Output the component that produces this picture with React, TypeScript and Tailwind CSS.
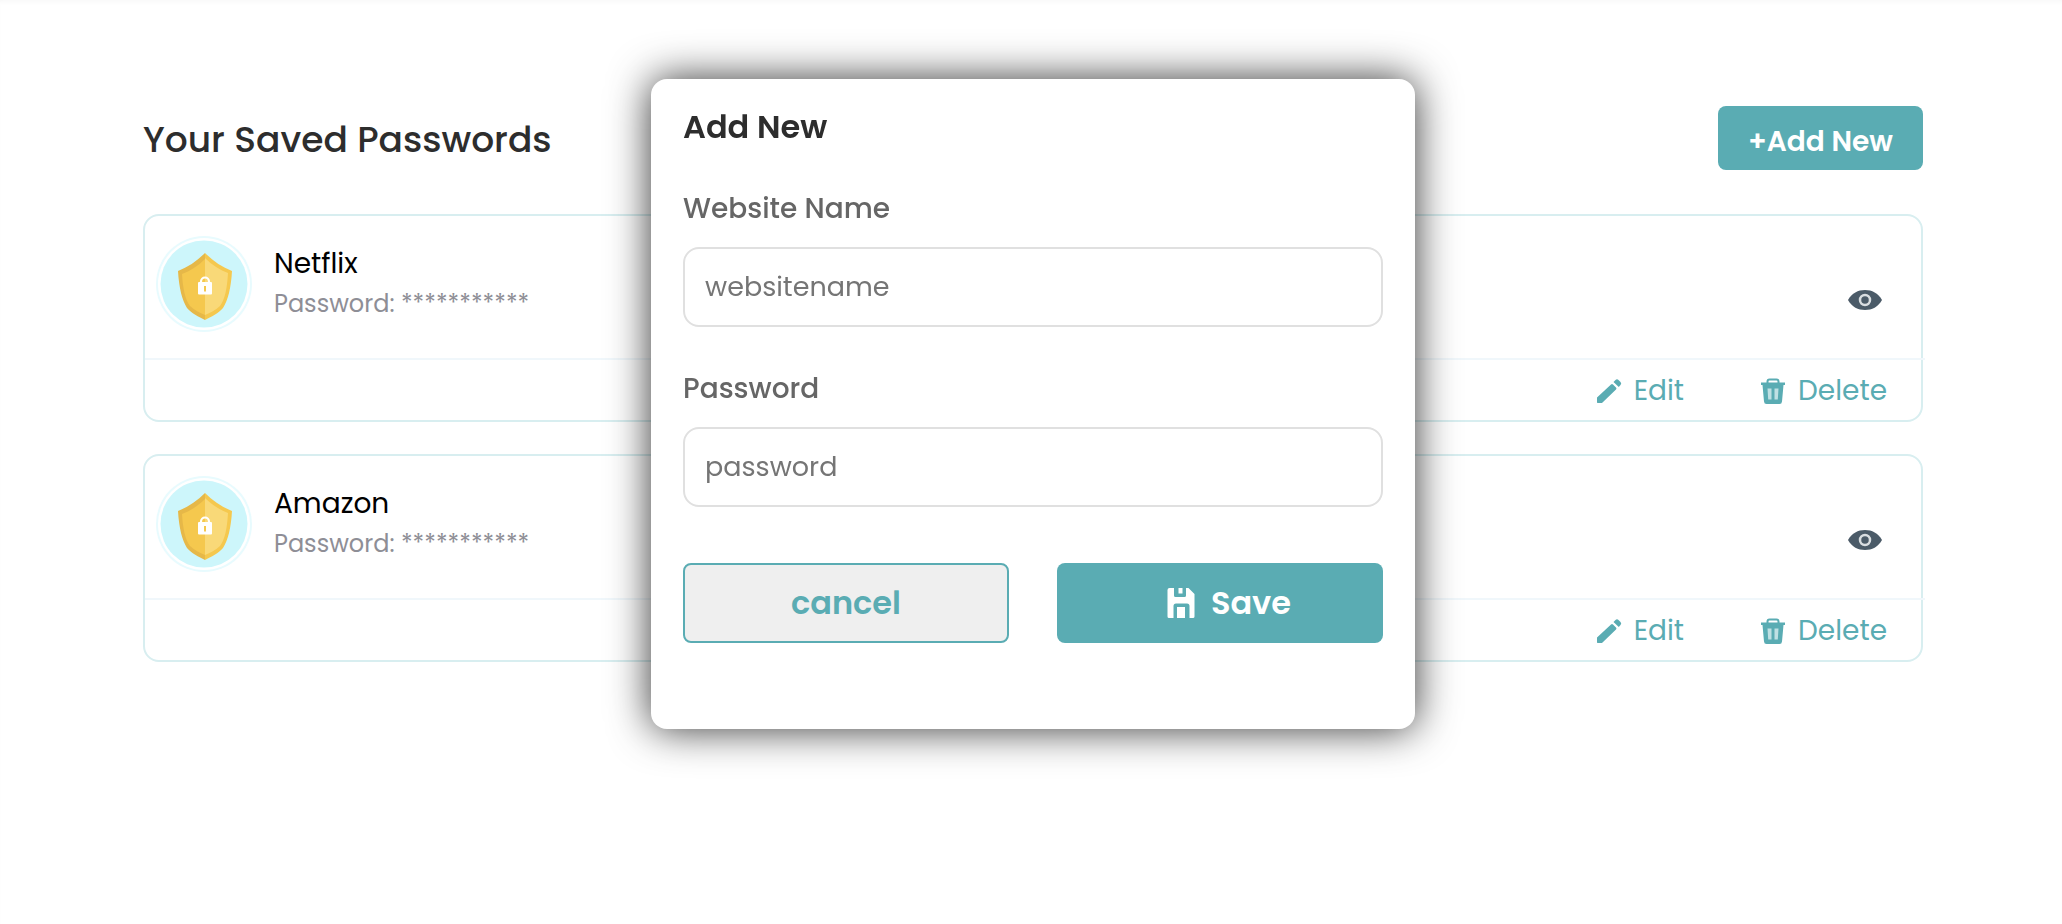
import { useId } from "react";

const entries = [{ name: "Netflix" }, { name: "Amazon" }];

function ShieldIcon() {
  return (
    <svg viewBox="0 0 96 96" className="size-24 shrink-0" aria-hidden="true">
      <circle cx="48" cy="48" r="48" fill="#e8fbfe" />
      <circle cx="48" cy="48" r="46" fill="#ffffff" />
      <circle cx="48" cy="48" r="43.5" fill="#cdf6fb" />
      <g transform="translate(1 0)">
        <path d="M48 17C40 25 31 31 21 35C22 52 25 64 30 72C34 77 42 81 48 84Z" fill="#e6b848" />
        <path d="M48 17C56 25 65 31 75 35C74 52 71 64 66 72C62 77 54 81 48 84Z" fill="#f5c84e" />
        <path d="M48 23C41 30 33 35 25 38C26 53 28 63 33 70C37 74 43 77 48 79Z" fill="#f5c84e" />
        <path d="M48 22C55 29 63 34 71 37C70 53 68 63 63 70C59 74 53 77 48 79Z" fill="#f9d978" />
        <path d="M44 47V45.500a4 4 0 0 1 8 0V47" fill="none" stroke="#fff" strokeWidth="2.200" />
        <rect x="41" y="46" width="14" height="12.500" rx="1" fill="#fff" />
        <path d="M48 50V55.500" stroke="#f5c84e" strokeWidth="2" />
      </g>
    </svg>
  );
}

function EyeIcon() {
  return (
    <svg viewBox="0 0 34 22" className="h-[22px] w-[34px]" aria-hidden="true">
      <path d="M0 11C4 4 10 1 17 1S30 4 34 11C30 18 24 21 17 21S4 18 0 11Z" fill="#4b5b68" />
      <circle cx="17" cy="11" r="5" fill="none" stroke="#d9dee1" strokeWidth="2.500" />
    </svg>
  );
}

function PencilIcon() {
  return (
    <svg viewBox="0 0 26 26" className="size-[26px]" fill="#5aacb3" aria-hidden="true">
      <path d="M1 19.500L15 6.500Q16 5.500 17 6.500L20 9.500Q21 10.500 20 11.500L6.500 24.500Q6 25 5 25H1.500Q1 25 1 24Z" />
      <path d="M17.500 4L19.500 2Q21 .5 22.500 2L24.500 4Q26 5.500 24.500 7L22.800 9Z" />
    </svg>
  );
}

function TrashIcon() {
  return (
    <svg viewBox="0 0 26 28" className="h-7 w-[26px]" aria-hidden="true">
      <path d="M7.500 6V4.500Q7.500 2.500 9.500 2.500H16.500Q18.500 2.500 18.500 4.500V6" fill="none" stroke="#5aacb3" strokeWidth="2" />
      <path d="M1 5.500H25V8H23.500L22 24.500Q21.800 27 19.500 27H6.500Q4.200 27 4 24.500L2.500 8H1Z" fill="#5aacb3" />
      <path d="M7.500 11.500H11.500V22.500H8.200Z M14.500 11.500H18.500L17.800 22.500H14.500Z" fill="#bfe0e3" />
    </svg>
  );
}

function SaveIcon() {
  return (
    <svg viewBox="0 0 28 32" className="h-8 w-7" fill="#fff" aria-hidden="true">
      <path d="M2.500 1H7V8.500Q7 10 8.500 10H17.500Q19 10 19 8.500V1H21.500L27.500 7V29.500Q27.500 31 26 31H22.500V19Q22.500 16.500 20 16.500H9Q6.500 16.500 6.500 19V31H2Q.5 31 .5 29.500V3Q.5 1 2.500 1Z" />
      <path d="M11.500 1H15.500V6.500H11.500Z M10 20H18V31H10Z" />
    </svg>
  );
}

function PasswordCard({ name }: { name: string }) {
  return (
    <li className="rounded-2xl border-2 border-[#d8eef0]">
      <div className="flex h-[142px] items-start pt-5 pr-[39px] pl-[11px]">
        <ShieldIcon />
        <div className="ml-[22px] pt-2">
          <h2 className="text-[28px] leading-10 text-black">{name}</h2>
          <p className="text-2xl leading-10 text-[#8e8e96]">Password: ***********</p>
        </div>
        <button type="button" aria-label={`Show ${name} password`} className="mt-[53px] ml-auto">
          <EyeIcon />
        </button>
      </div>
      <div className="-mr-1 flex h-[62px] items-center justify-end gap-[76px] border-t-2 border-[#f0f7fb] pt-0.5 pr-[38px] text-[28px] leading-10 text-[#5aacb3]">
        <button type="button" className="flex items-center gap-3">
          <PencilIcon />
          Edit
        </button>
        <button type="button" className="flex items-center gap-3">
          <TrashIcon />
          Delete
        </button>
      </div>
    </li>
  );
}

function Field({ label, placeholder, type }: { label: string; placeholder: string; type: string }) {
  const id = useId();
  return (
    <div className="flex flex-col gap-[18px]">
      <label htmlFor={id} className="text-[28px] leading-10 font-medium text-[#666666]">
        {label}
      </label>
      <input
        id={id}
        type={type}
        placeholder={placeholder}
        className="h-20 w-full rounded-2xl border-2 border-[#e0e0e0] bg-white px-5 text-[27px] text-[#2d2d2d] placeholder:text-[#757575]"
      />
    </div>
  );
}

export default function App() {
  return (
    <div className="min-h-screen bg-white font-['Poppins','Inter',sans-serif] shadow-[inset_0_4px_4px_-2px_#f8f8f8]">
      <main className="pt-[106px] pr-[139px] pb-16 pl-[143px]">
        <header className="flex h-16 items-center justify-between">
          <h1 className="pt-1 text-4xl font-medium text-[#2d2d2d]">Your Saved Passwords</h1>
          <button type="button" className="h-16 rounded-lg bg-[#5aacb3] px-[30px] pt-2 text-[28px] font-semibold text-white">
            +Add New
          </button>
        </header>
        <ul className="mt-11 flex flex-col gap-8">
          {entries.map((entry) => (
            <PasswordCard key={entry.name} name={entry.name} />
          ))}
        </ul>
      </main>

      <div className="fixed inset-x-0 top-[79px] flex justify-center pl-1">
        <form
          role="dialog"
          aria-labelledby="dialog-title"
          onSubmit={(event) => event.preventDefault()}
          className="w-full max-w-[764px] rounded-2xl bg-white px-8 pt-6 pb-[86px] shadow-[0_0_42px_rgba(0,0,0,0.8)]"
        >
          <h2 id="dialog-title" className="text-[32px] leading-12 font-semibold text-[#2d2d2d]">
            Add New
          </h2>
          <div className="mt-[38px] flex flex-col gap-[42px]">
            <Field label="Website Name" placeholder="websitename" type="text" />
            <Field label="Password" placeholder="password" type="password" />
          </div>
          <div className="mt-14 grid grid-cols-2 gap-12 text-[32px] font-semibold">
            <button type="button" className="h-20 rounded-lg border-2 border-[#5aacb3] bg-[#efefef] text-[#5aacb3]">
              cancel
            </button>
            <button type="submit" className="flex h-20 items-center justify-center gap-4 rounded-lg bg-[#5aacb3] pl-[18px] text-white">
              <SaveIcon />
              Save
            </button>
          </div>
        </form>
      </div>
    </div>
  );
}
